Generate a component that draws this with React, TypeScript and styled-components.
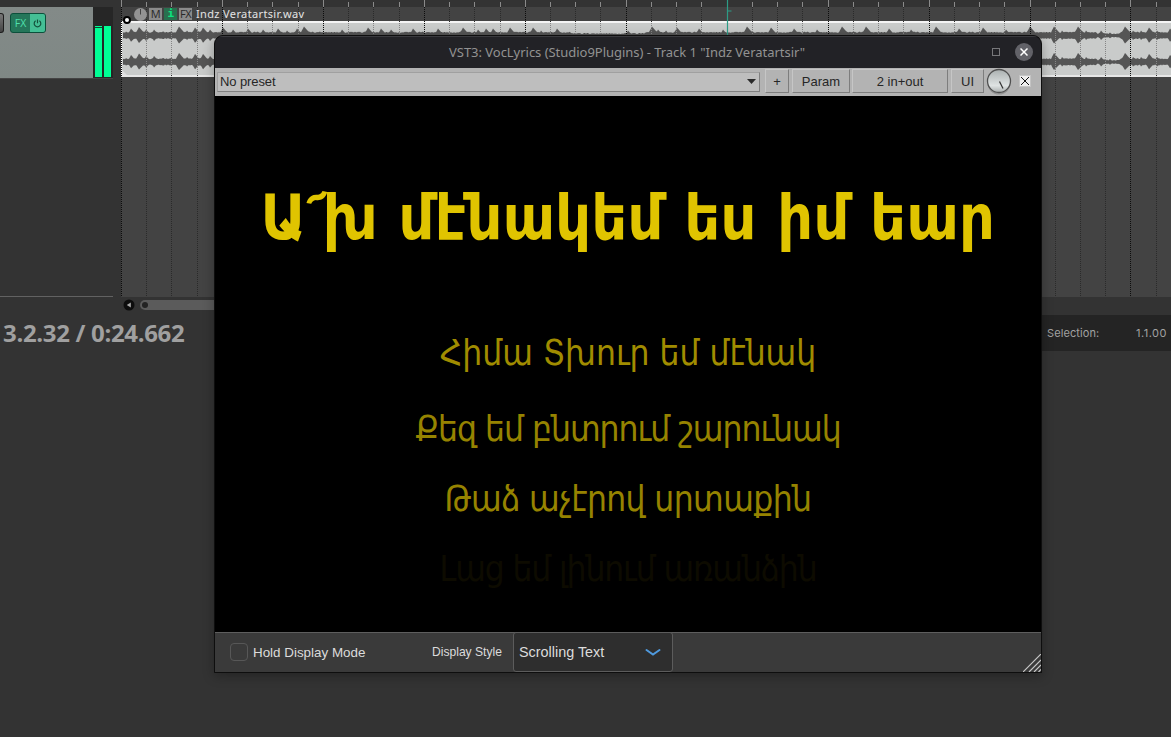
import React from "react";
import styled, { createGlobalStyle } from "styled-components";

const Global = createGlobalStyle`
  * { box-sizing: border-box; }
  body { margin: 0; background: #333; overflow: hidden; }
`;

const Desktop = styled.div`
  position: relative;
  width: 1171px;
  height: 737px;
  background: #333333;
  overflow: hidden;
  font-family: "Liberation Sans", Arial, sans-serif;
`;
const Workspace = styled.div`
  display: grid;
  grid-template-columns: 121px 1fr;
  height: 297px;
`;
const TrackColumn = styled.div`
  display: flex;
  flex-direction: column;
  width: 113px;
  padding-top: 7px;
  border-bottom: 1px solid #626262;
`;
const TrackPanel = styled.div`
  display: flex;
  height: 72px;
  background: #262626;
  border-bottom: 1px solid #444;
`;
const TrackFace = styled.div`
  display: flex;
  align-items: flex-start;
  width: 93px;
  padding-top: 6px;
  background: linear-gradient(#838a88, #7f8885);
`;
const KnobEdge = styled.div`
  width: 4px;
  height: 20px;
  margin-right: 6px;
  border: 1px solid #1d1d1d;
  border-left: 0;
  border-radius: 0 3px 3px 0;
  background: linear-gradient(#777, #444);
`;
const FxGroup = styled.div`
  display: flex;
  width: 36px;
  height: 20px;
  border: 1px solid #0c4f3b;
  border-radius: 3px;
  overflow: hidden;
  background: #25765a;
`;
const FxLabel = styled.div`
  width: 19px;
  text-align: center;
  font: 10.5px/18px "Open Sans", sans-serif;
  color: #4fe0ac;
`;
const FxPower = styled.div`
  display: flex;
  flex: 1;
  align-items: center;
  justify-content: center;
  background: #44bf95;
`;
const Meter = styled.div`
  display: flex;
  gap: 2px;
  padding: 19px 2px 1px;
`;
const MeterBar = styled.div<{ $peak?: boolean }>`
  width: 7px;
  background: #00ff95;
  border-top: ${(p) => (p.$peak ? "1px solid #00ff95" : "0")};
  box-shadow: ${(p) => (p.$peak ? "inset 0 1px 0 #104430" : "none")};
`;
const Arrange = styled.div`
  display: grid;
  grid-template-rows: 7px 14px 56px 1fr;
  position: relative;
  background: #434343;
`;
const Ruler = styled.div`
  background: #333;
`;
const ItemHeader = styled.div`
  display: flex;
  align-items: center;
  gap: 2px;
  position: relative;
  z-index: 1;
  padding-left: 13px;
`;
const ItemButton = styled.div<{ $on?: boolean }>`
  width: 13px;
  height: 12px;
  background: ${(p) => (p.$on ? "#28704f" : "#8b8b8b")};
  color: ${(p) => (p.$on ? "#0be57e" : "#292929")};
  font: ${(p) => (p.$on ? "bold 11px/12px 'DejaVu Sans Mono'" : "11px/12px 'Open Sans'")}, sans-serif;
  text-align: center;
  letter-spacing: -0.5px;
`;
const ItemName = styled.div`
  margin-left: 2px;
  font: 11px/14px "Noto Sans", sans-serif;
  letter-spacing: 0.36px;
  color: #e4e4e4;
  white-space: nowrap;
`;
const Item = styled.div`
  background: #c9cbca;
  border-top: 2px solid #f4f4f4;
  border-bottom: 2px solid #e6e6e6;
  svg { display: block; }
`;
const GridOverlay = styled.svg`
  position: absolute;
  left: 0;
  top: 0;
`;
const AnchorDot = styled.div`
  position: absolute;
  left: 2px;
  top: 16px;
  width: 8px;
  height: 8px;
  border: 2px solid #000;
  border-radius: 50%;
  background: #fff;
`;
const ScrollRow = styled.div`
  display: flex;
  align-items: center;
  height: 16px;
  padding-left: 123px;
  gap: 5px;
`;
const ScrollTrack = styled.div`
  display: flex;
  align-items: center;
  flex: 1;
  height: 10px;
  margin-right: 140px;
  padding-left: 2px;
  border-radius: 5px;
  background: #5b5b5b;
`;
const ScrollGrip = styled.div`
  width: 6px;
  height: 6px;
  border-radius: 50%;
  background: #232323;
`;
const Transport = styled.div`
  display: flex;
  justify-content: space-between;
  align-items: center;
  margin-top: 2px;
  height: 36px;
`;
const Clock = styled.div`
  padding-left: 3px;
  font: bold 24px/36px "Open Sans", "Noto Sans", sans-serif;
  letter-spacing: -0.33px;
  color: #a0a0a0;
  white-space: nowrap;
`;
const Selection = styled.div`
  display: flex;
  justify-content: space-between;
  width: 131px;
  padding: 0 4px 0 7px;
  background: #242424;
  font: 11px/36px Inter, sans-serif;
  letter-spacing: 0.1px;
  color: #a2a2a2;
`;
const SelectionValue = styled.span`
  letter-spacing: 0.5px;
`;
const PluginWindow = styled.div`
  position: absolute;
  left: 214px;
  top: 35px;
  width: 828px;
  height: 638px;
  display: flex;
  flex-direction: column;
  border: 1px solid #0e0e0e;
  border-radius: 9px 9px 0 0;
  background: #000;
  box-shadow: 0 3px 12px rgba(0, 0, 0, 0.3);
  overflow: hidden;
`;
const TitleBar = styled.div`
  display: flex;
  align-items: center;
  height: 32px;
  padding: 0 8px 1px 0;
  background: #222226;
  border-top: 1px solid #3a3a3e;
`;
const Title = styled.div`
  flex: 1;
  padding-left: 234px;
  font: 13px/28px "Noto Sans", sans-serif;
  letter-spacing: -0.03px;
  color: #929292;
  white-space: nowrap;
`;
const Maximize = styled.div`
  width: 8px;
  height: 8px;
  margin-right: 15px;
  border: 1px solid #77777a;
`;
const CloseButton = styled.div`
  display: flex;
  align-items: center;
  justify-content: center;
  width: 18px;
  height: 18px;
  border-radius: 50%;
  background: #626268;
`;
const ToolBar = styled.div`
  display: flex;
  align-items: center;
  height: 28px;
  padding: 0 10px 2px 2px;
  background: #b3b3b3;
`;
const Preset = styled.div`
  display: flex;
  justify-content: space-between;
  align-items: center;
  width: 543px;
  height: 20px;
  margin: 1px 5px 0 0;
  padding: 0 3px 0 2px;
  border: 1px solid #a0a0a0;
  border-bottom-color: #808080;
  border-right-color: #808080;
  background: #bebebe;
  font-size: 13px;
  letter-spacing: -0.1px;
  color: #262626;
`;
const ToolButton = styled.div<{ $w: number; $gap: number }>`
  width: ${(p) => p.$w}px;
  height: 24px;
  margin-right: ${(p) => p.$gap}px;
  border: 1px solid;
  border-color: #c6c6c6 #7d7d7d #7d7d7d #c6c6c6;
  font-size: 13px;
  line-height: 24px;
  text-align: center;
  color: #262626;
  white-space: nowrap;
`;
const BypassBox = styled.svg`
  margin-left: 7px;
`;
const Lyrics = styled.div`
  display: flex;
  flex-direction: column;
  align-items: center;
  height: 536px;
  padding-top: 82px;
  background: #000;
  font-family: "DejaVu Sans Condensed", "DejaVu Sans", sans-serif;
`;
const Line = styled.div<{ $gap: number; $color: string; $ls: number }>`
  margin-top: ${(p) => p.$gap}px;
  font-size: 35px;
  line-height: 50px;
  letter-spacing: ${(p) => p.$ls}px;
  color: ${(p) => p.$color};
  white-space: nowrap;
`;
const CurrentLine = styled.div`
  font-size: 62px;
  line-height: 80px;
  font-weight: 700;
  letter-spacing: 0.3px;
  word-spacing: 1px;
  color: #e0c400;
  white-space: nowrap;
`;
const Accent = styled.span`
  display: inline-block;
  margin: 0 -3px 0 -2px;
  transform: translate(-3px, -1px) scale(0.85, 0.8) rotate(12deg);
`;
const Footer = styled.div`
  display: flex;
  align-items: center;
  position: relative;
  height: 40px;
  padding: 0 0 1px 15px;
  background: #3a3a3a;
  border-top: 1px solid #5e5e5e;
  color: #dcdcdc;
`;
const CheckBox = styled.div`
  width: 18px;
  height: 18px;
  margin-right: 5px;
  border: 1px solid #575757;
  border-radius: 4px;
`;
const FooterLabel = styled.div<{ $size: number; $w: number }>`
  width: ${(p) => p.$w}px;
  font-size: ${(p) => p.$size}px;
  white-space: nowrap;
`;
const Select = styled.div`
  display: flex;
  align-items: center;
  justify-content: space-between;
  width: 160px;
  height: 40px;
  border: 1px solid #5c5c5c;
  padding: 0 11px 0 5px;
  border-radius: 3px;
  background: #2e2e2e;
  font-size: 14.4px;
`;
const Resizer = styled.svg`
  position: absolute;
  right: 0;
  bottom: 0;
`;

/* transient position, height above the floor level */
const peaks: [number, number][] = [
  [126, 4], [131, 7], [139, 8.5], [146, 6], [154, 6], [163, 4], [171, 4], [179, 9], [187, 5], [195, 8], [203, 8], [210, 6],
  [223, 8], [233, 6], [248, 7], [263, 6], [278, 7], [287, 5], [297, 7], [304, 9], [320, 4], [342, 6], [368, 8], [381, 7],
  [391, 6], [413, 7], [438, 7], [463, 8], [478, 6], [486, 7], [493, 7], [510, 8], [533, 8], [541, 5], [557, 7], [628, 5],
  [652, 9], [658, 6], [666, 5], [677, 8], [699, 7], [723, 6], [747, 9], [771, 8], [794, 7], [817, 6], [842, 9], [866, 9],
  [889, 7], [911, 6], [936, 9], [959, 7], [983, 8], [1006, 6], [1030, 9], [1054, 9], [1062, 5], [1078, 9], [1086, 5],
  [1101, 5], [1110, 3], [1125, 9], [1133, 5], [1141, 5], [1149, 8], [1157, 5], [1170, 7],
];
const level = (x: number) => {
  const quiet = (x > 570 && x < 645) || (x > 1096 && x < 1121);
  let a = (quiet ? 1.6 : 2.8) + ((x * 7 + ((x * x) % 11)) % 5) * 0.25;
  for (const [px, h] of peaks) {
    const d = x - px;
    if (d >= 0 && d < 9) a = Math.max(a, h - d * 1.15);
    else if (d < 0 && d > -3) a = Math.max(a, h + d * 1.9);
  }
  return a;
};
const lane = (cy: number) => {
  const up: string[] = [];
  const down: string[] = [];
  for (let x = 123; x <= 1171; x++) {
    const a = level(x);
    up.push(`${x - 121},${(cy - a).toFixed(1)}`);
    down.unshift(`${x - 121},${(cy + a * 0.9).toFixed(1)}`);
  }
  return up.concat(down).join(" ");
};
const beats = Array.from({ length: 42 }, (_, i) => ({ x: Math.round(25.2365 * i) + 0.5, major: i % 4 === 0, cursor: i === 24 }));

function Grid() {
  return (
    <GridOverlay width="1050" height="297">
      {beats.map((b) => (
        <g key={b.x}>
          <line x1={b.x} x2={b.x} y1={b.major ? 0 : 2} y2="7" stroke="#8a8a8a" />
          <line x1={b.x} x2={b.x} y1="7" y2="297" stroke={b.major ? "#0c0c0c" : "#2a2a2a"} strokeDasharray="1 1" />
          {!b.major && <line x1={b.x} x2={b.x} y1="23" y2="75" stroke="#858585" strokeDasharray="1 1" />}
          {b.cursor && <path d={`M${b.x} 0V36M${b.x} 11h4`} stroke="#2d9c86" strokeWidth="1.2" fill="none" />}
        </g>
      ))}
      <line x1="0.5" x2="0.5" y1="22" y2="76" stroke="#fff" strokeDasharray="1 1" />
    </GridOverlay>
  );
}

export default function App() {
  return (
    <Desktop>
      <Global />
      <Workspace>
        <TrackColumn>
          <TrackPanel>
            <TrackFace>
              <KnobEdge />
              <FxGroup>
                <FxLabel>FX</FxLabel>
                <FxPower>
                  <svg width="9" height="9" viewBox="0 0 9 9" fill="none" stroke="#14513c" strokeWidth="1.2">
                    <path d="M2.6 1.8a3.3 3.3 0 1 0 3.8 0M4.5 0.5v3.8" />
                  </svg>
                </FxPower>
              </FxGroup>
            </TrackFace>
            <Meter>
              <MeterBar $peak />
              <MeterBar />
            </Meter>
          </TrackPanel>
        </TrackColumn>
        <Arrange>
          <Ruler />
          <ItemHeader>
            <svg width="13" height="13" viewBox="0 0 13 13">
              <circle cx="6.5" cy="6.5" r="6.5" fill="#939393" />
              <path d="M6.5 1v5.5" stroke="#444" />
            </svg>
            <ItemButton>M</ItemButton>
            <ItemButton $on>i</ItemButton>
            <ItemButton>FX</ItemButton>
            <ItemName>Indz Veratartsir.wav</ItemName>
          </ItemHeader>
          <Item>
            <svg width="1050" height="52">
              <path d="M0 46l6 6H0z" fill="#e0e0e0" />
              <polygon points={lane(12.5)} fill="#555" />
              <polygon points={lane(39)} fill="#555" />
            </svg>
          </Item>
          <Grid />
          <AnchorDot />
        </Arrange>
      </Workspace>
      <ScrollRow>
        <svg width="12" height="12" viewBox="0 0 12 12">
          <circle cx="6" cy="6" r="5.5" fill="#0d0d0d" />
          <path d="M7.8 3.6v4.8L3.8 6z" fill="#aaa" />
        </svg>
        <ScrollTrack>
          <ScrollGrip />
        </ScrollTrack>
      </ScrollRow>
      <Transport>
        <Clock>3.2.32 / 0:24.662</Clock>
        <Selection>
          <span>Selection:</span>
          <SelectionValue>1.1.00</SelectionValue>
        </Selection>
      </Transport>

      <PluginWindow>
        <TitleBar>
          <Title>VST3: VocLyrics (Studio9Plugins) - Track 1 "Indz Veratartsir"</Title>
          <Maximize />
          <CloseButton>
            <svg width="8" height="8" viewBox="0 0 8 8" stroke="#fff" strokeWidth="1.5">
              <path d="M0.5 0.5l7 7M7.5 0.5l-7 7" />
            </svg>
          </CloseButton>
        </TitleBar>
        <ToolBar>
          <Preset>
            No preset
            <svg width="9" height="5" viewBox="0 0 9 5">
              <path d="M0 0h9L4.5 5z" fill="#2a2a2a" />
            </svg>
          </Preset>
          <ToolButton $w={24} $gap={3}>+</ToolButton>
          <ToolButton $w={58} $gap={2}>Param</ToolButton>
          <ToolButton $w={96} $gap={3}>2 in+out</ToolButton>
          <ToolButton $w={33} $gap={2}>UI</ToolButton>
          <svg width="26" height="28" viewBox="0 0 26 28">
            <defs>
              <linearGradient id="dial" x1="0" y1="0" x2="0" y2="1">
                <stop offset="0" stopColor="#aab0b0" />
                <stop offset="0.7" stopColor="#dfe3e3" />
                <stop offset="1" stopColor="#a8adad" />
              </linearGradient>
            </defs>
            <circle cx="13" cy="16" r="11.5" fill="#929292" />
            <circle cx="13" cy="14" r="11.5" fill="url(#dial)" stroke="#505050" strokeWidth="1.3" />
            <path d="M13.5 14.5l3.500 7" stroke="#333" strokeWidth="1.3" />
          </svg>
          <BypassBox width="12" height="12" viewBox="0 0 12 12">
            <rect x="0.5" y="0.5" width="11" height="11" fill="#eee" stroke="#c4c4c4" />
            <path d="M2 2l8 8M10 2l-8 8" stroke="#111" />
          </BypassBox>
        </ToolBar>
        <Lyrics>
          <CurrentLine>
            Ա<Accent>՜</Accent>խ մէնակեմ ես իմ եար
          </CurrentLine>
          <Line $gap={70} $ls={0} $color="#a08c00">Հիմա Տխուր եմ մէնակ</Line>
          <Line $gap={26} $ls={-1} $color="#968300">Քեզ եմ բնտրում շարունակ</Line>
          <Line $gap={20} $ls={-0.6} $color="#968300">Թաձ աչէրով սրտաքին</Line>
          <Line $gap={20} $ls={-1.1} $color="#0d0b00">Լաց եմ լինում առանձին</Line>
        </Lyrics>
        <Footer>
          <CheckBox />
          <FooterLabel $size={13.4} $w={179}>Hold Display Mode</FooterLabel>
          <FooterLabel $size={12.1} $w={81}>Display Style</FooterLabel>
          <Select>
            Scrolling Text
            <svg width="16" height="8" viewBox="0 0 16 8" fill="none" stroke="#4f9ade" strokeWidth="2">
              <path d="M1.500 2l6.500 4.500 6.500-4.500" strokeLinecap="round" />
            </svg>
          </Select>
          <Resizer width="18" height="18" viewBox="0 0 18 18" stroke="#c8c8c8" strokeWidth="1.2">
            <path d="M0 18L18 0M6 18L18 6M11 18l7-7M15.5 18l2.500-2.500" />
          </Resizer>
        </Footer>
      </PluginWindow>
    </Desktop>
  );
}
